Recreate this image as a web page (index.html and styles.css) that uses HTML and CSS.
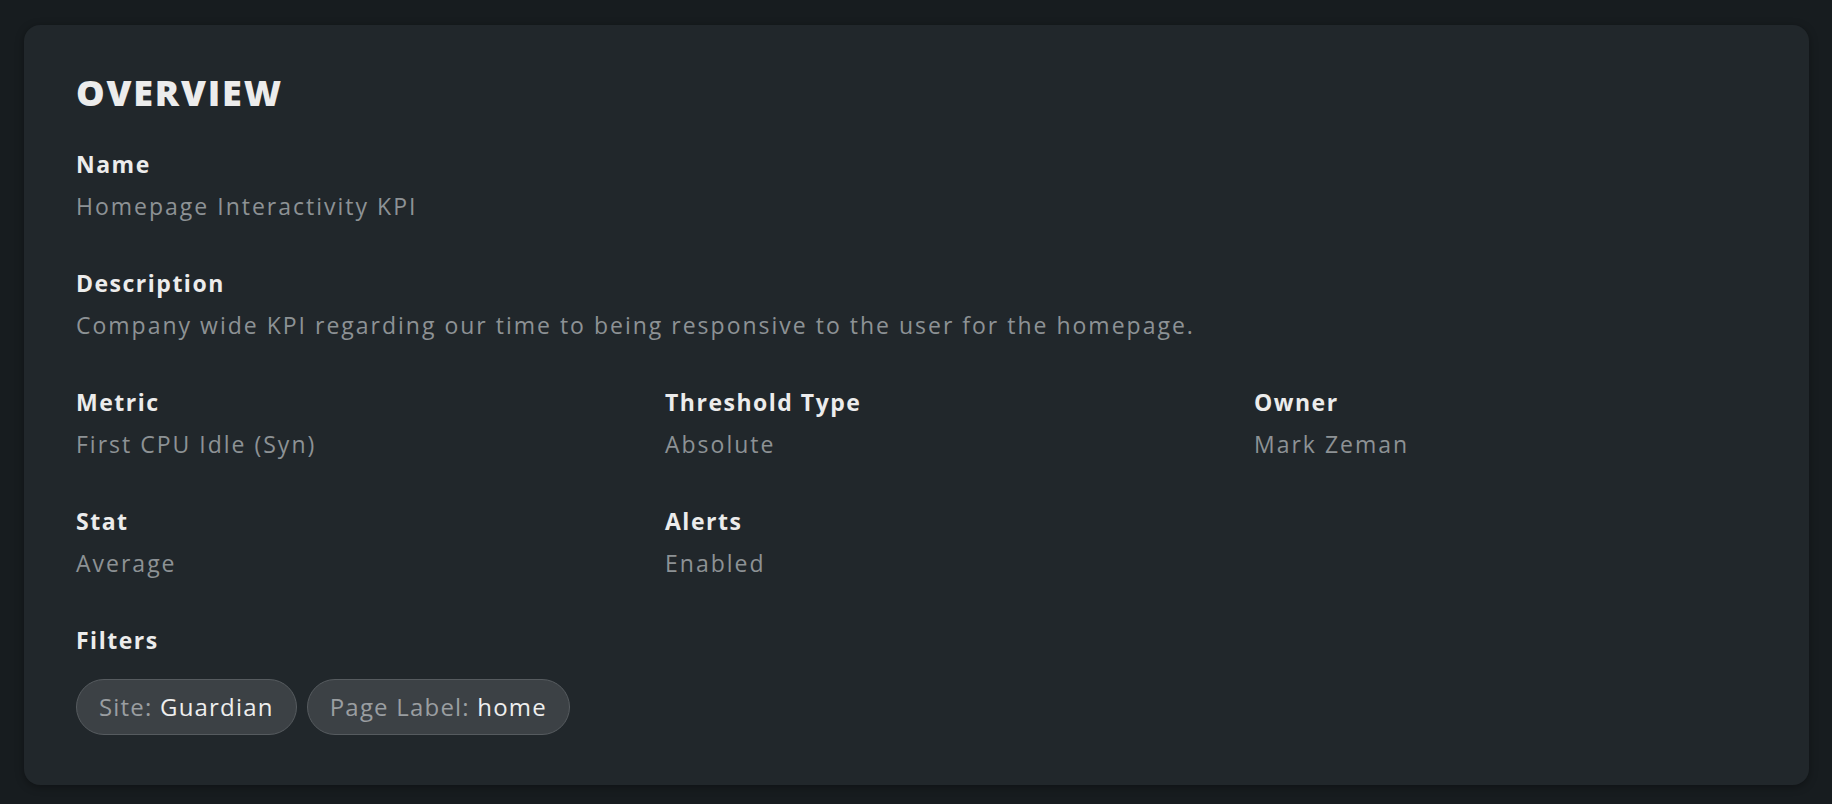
FILE: index.html
```html
<!DOCTYPE html>
<html lang="en">
<head>
<meta charset="utf-8">
<title>Overview</title>
<link rel="stylesheet" href="styles.css">
</head>
<body>
<main class="page">
  <section class="card">
    <h1 class="title">OVERVIEW</h1>
    <div class="fields">
      <div class="field wide">
        <div class="label">Name</div>
        <div class="value">Homepage Interactivity KPI</div>
      </div>
      <div class="field wide">
        <div class="label">Description</div>
        <div class="value">Company wide KPI regarding our time to being responsive to the user for the homepage.</div>
      </div>
      <div class="field">
        <div class="label">Metric</div>
        <div class="value">First CPU Idle (Syn)</div>
      </div>
      <div class="field">
        <div class="label">Threshold Type</div>
        <div class="value">Absolute</div>
      </div>
      <div class="field">
        <div class="label">Owner</div>
        <div class="value">Mark Zeman</div>
      </div>
      <div class="field first-col">
        <div class="label">Stat</div>
        <div class="value">Average</div>
      </div>
      <div class="field">
        <div class="label">Alerts</div>
        <div class="value">Enabled</div>
      </div>
      <div class="field wide">
        <div class="label">Filters</div>
        <div class="chips">
          <span class="chip"><span class="chip-key">Site:</span> <span class="chip-val">Guardian</span></span>
          <span class="chip"><span class="chip-key">Page Label:</span> <span class="chip-val">home</span></span>
        </div>
      </div>
    </div>
  </section>
</main>
</body>
</html>
```

FILE: styles.css
```css
* { box-sizing: border-box; }
html, body {
  margin: 0;
  padding: 0;
  background: #171c1f;
  height: 100%;
}
body {
  font-family: "Open Sans", "Lato", sans-serif;
  color: #ececec;
}
.page {
  padding: 25px 23px 19px 24px;
}
.card {
  background: #21272b;
  border-radius: 16px;
  box-shadow: 0 2px 8px rgba(0, 0, 0, 0.35);
  padding: 46px 52px 40px 52px;
  min-height: 760px;
}
.title {
  margin: 0 0 35px 0;
  font-size: 36px;
  line-height: 44px;
  font-weight: 800;
  letter-spacing: 1.8px;
  color: #ececec;
}
.fields {
  display: grid;
  grid-template-columns: repeat(3, 1fr);
  column-gap: 86px;
  row-gap: 49px;
}
.field.wide {
  grid-column: 1 / -1;
}
.field.first-col { grid-column: 1; }
.label {
  font-size: 23px;
  line-height: 28px;
  font-weight: 700;
  letter-spacing: 1.5px;
  color: #ececec;
}
.value {
  margin-top: 14px;
  font-size: 23px;
  line-height: 28px;
  color: #8d9295;
  letter-spacing: 2px;
}
.chips {
  margin-top: 25px;
  display: flex;
  gap: 10px;
}
.chip {
  display: inline-block;
  height: 56px;
  line-height: 53px;
  padding: 0 22px;
  border-radius: 28px;
  background: #3c4145;
  border: 1.5px solid #565b5f;
  font-size: 24px;
  letter-spacing: 1.2px;
  white-space: nowrap;
}
.chip-key { color: #9a9ea1; }
.chip-val { color: #eeeeee; }
```
